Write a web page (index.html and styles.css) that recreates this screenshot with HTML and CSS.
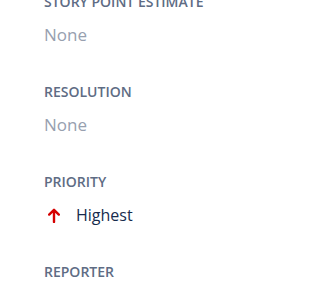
FILE: index.html
```html
<!DOCTYPE html>
<html lang="en">
<head>
    <meta charset="UTF-8">
    <title>Issue fields</title>
    <link rel="stylesheet" href="styles.css">
</head>
<body>
    <div class="fields">
        <div class="field">
            <h3 class="label">Story point estimate</h3>
            <div class="value empty">None</div>
        </div>
        <div class="field">
            <h3 class="label">Resolution</h3>
            <div class="value empty">None</div>
        </div>
        <div class="field">
            <h3 class="label">Priority</h3>
            <div class="value priority">
                <svg class="arrow" width="12" height="15" viewBox="0 0 12 15">
                    <path d="M6 14V2M1.2 6.6L6 1.8L10.8 6.6" fill="none" stroke="#d50000" stroke-width="2.4" stroke-linecap="round" stroke-linejoin="round"/>
                </svg>
                <span>Highest</span>
            </div>
        </div>
        <div class="field">
            <h3 class="label">Reporter</h3>
        </div>
    </div>
</body>
</html>
```

FILE: styles.css
```css
body {
    margin: 0;
    background: #fff;
    font-family: 'Open Sans', 'Noto Sans', sans-serif;
    overflow: hidden;
}

.fields {
    padding: 0 0 0 44px;
    margin-top: -17px;
}

.field {
    height: 90px;
}

.label {
    margin: 0;
    padding-top: 8px;
    height: 22px;
    font-size: 14px;
    font-weight: 600;
    text-transform: uppercase;
    color: #5e6c84;
    line-height: 22px;
}

.value {
    margin-top: 10px;
    font-size: 16px;
    line-height: 24px;
}

.empty {
    color: #97a0af;
    font-size: 17px;
}

.priority {
    display: flex;
    align-items: center;
    gap: 16px;
    color: #172b4d;
    padding-left: 4px;
}

.arrow {
    display: block;
}
```
